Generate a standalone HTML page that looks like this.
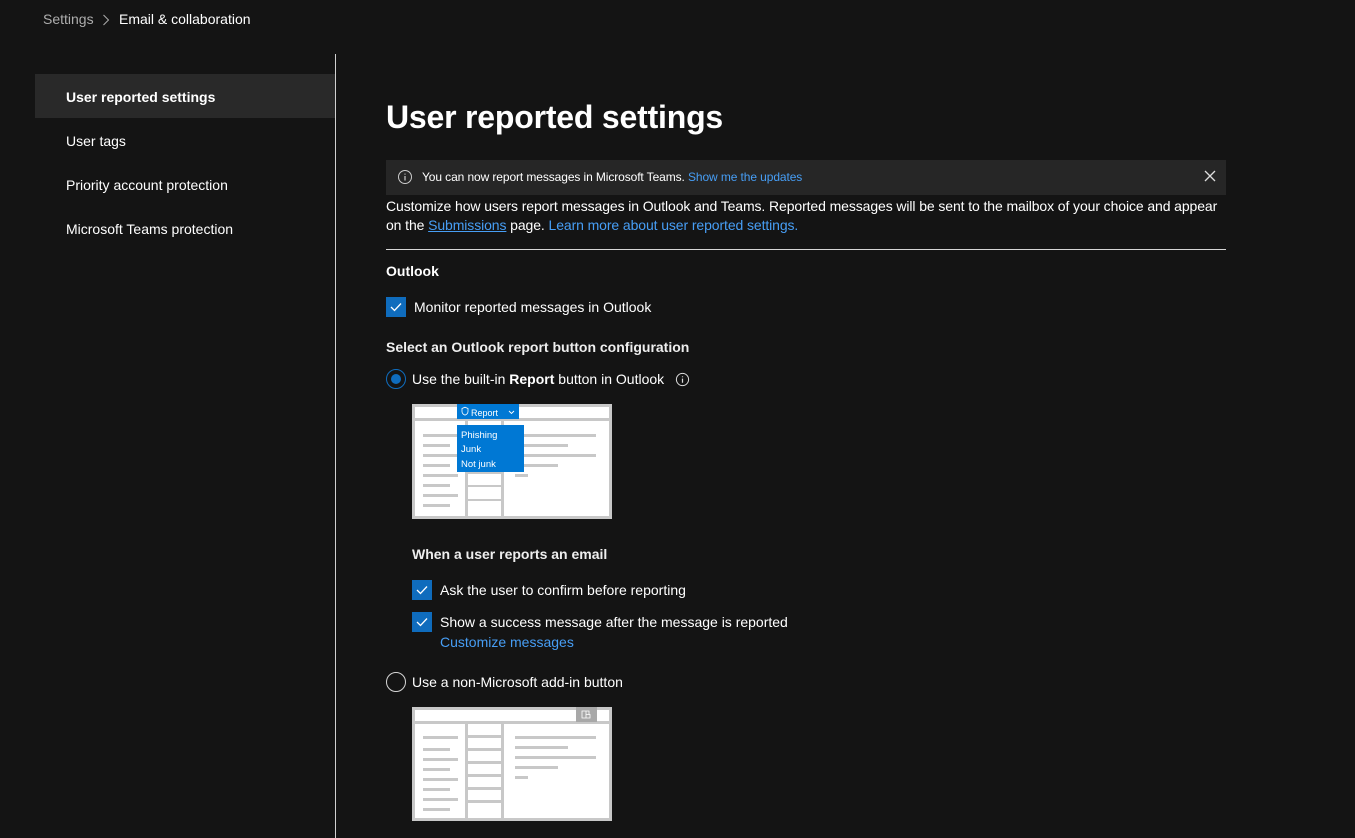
<!DOCTYPE html>
<html><head><meta charset="utf-8"><style>
*{margin:0;padding:0;box-sizing:border-box}
body{width:1355px;height:838px;background:#141414;color:#fff;font-family:"Liberation Sans",sans-serif;position:relative;overflow:hidden;font-size:14px}
.a{position:absolute;white-space:nowrap}
.link{color:#479ef5}
.cb{position:absolute;width:20px;height:20px;background:#0f6cbd;}
.cb svg{position:absolute;left:4px;top:5px}
.rad{position:absolute;width:20px;height:20px;border:1.5px solid #d6d6d6;border-radius:50%}
.nav{position:absolute;left:66px;font-size:14px;color:#fff}
</style></head><body>
<div class="a" style="left:43px;top:11px;color:#adadad;font-size:14px">Settings</div>
<svg class="a" style="left:102px;top:14px" width="8" height="12" viewBox="0 0 8 12"><path d="M1.5 1l5 5-5 5" fill="none" stroke="#adadad" stroke-width="1"/></svg>
<div class="a" style="left:119px;top:11px;color:#fff;font-size:14px">Email &amp; collaboration</div>

<div style="position:absolute;left:35px;top:74px;width:300px;height:44px;background:#292929"></div>
<div style="position:absolute;left:335px;top:54px;width:1px;height:784px;background:#d0d0d0"></div>
<div class="nav" style="top:89px;font-weight:bold">User reported settings</div>
<div class="nav" style="top:133px">User tags</div>
<div class="nav" style="top:177px">Priority account protection</div>
<div class="nav" style="top:221px">Microsoft Teams protection</div>

<div class="a" style="left:386px;top:99px;font-size:32px;font-weight:bold;letter-spacing:-0.2px">User reported settings</div>

<div style="position:absolute;left:386px;top:160px;width:840px;height:35px;background:#262626"></div>
<svg class="a" style="left:397px;top:169px" width="16" height="16" viewBox="0 0 16 16"><circle cx="8" cy="8" r="6.5" fill="none" stroke="#ccc" stroke-width="1"/><path d="M8 7v4.5M8 4.6v1" stroke="#ccc" stroke-width="1.2"/></svg>
<div class="a" style="left:422px;top:170px;font-size:12px;color:#fff;letter-spacing:-0.1px">You can now report messages in Microsoft Teams. <span class="link" style="margin-left:0px">Show me the updates</span></div>
<svg class="a" style="left:1204px;top:170px" width="12" height="12" viewBox="0 0 12 12"><path d="M1 1L11 11M11 1L1 11" stroke="#ddd" stroke-width="1.3"/></svg>

<div class="a" style="left:386px;top:197px;font-size:14px;line-height:19px;color:#fff;letter-spacing:-0.1px">Customize how users report messages in Outlook and Teams. Reported messages will be sent to the mailbox of your choice and appear<br>on the <span class="link" style="text-decoration:underline">Submissions</span> page. <span class="link">Learn more about user reported settings.</span></div>
<div style="position:absolute;left:386px;top:249px;width:840px;height:1px;background:#d6d6d6"></div>

<div class="a" style="left:386px;top:263px;font-weight:bold;font-size:14px">Outlook</div>
<div class="cb" style="left:386px;top:297px"><svg width="12" height="10" viewBox="0 0 12 10"><path d="M1 5l3.5 3.5L11 1.5" fill="none" stroke="#fff" stroke-width="1.3"/></svg></div>
<div class="a" style="left:414px;top:299px">Monitor reported messages in Outlook</div>

<div class="a" style="left:386px;top:339px;font-weight:bold;color:#eee">Select an Outlook report button configuration</div>
<div class="rad" style="left:386px;top:369px;border-color:#0f6cbd"><div style="position:absolute;left:3.5px;top:3.5px;width:10px;height:10px;border-radius:50%;background:#0f6cbd"></div></div>
<div class="a" style="left:412px;top:371px">Use the built-in <b>Report</b> button in Outlook</div>
<svg class="a" style="left:675px;top:372px" width="15" height="15" viewBox="0 0 16 16"><circle cx="8" cy="8" r="6.5" fill="none" stroke="#ddd" stroke-width="1.1"/><path d="M8 7v4.5M8 4.6v1" stroke="#ddd" stroke-width="1.3"/></svg>

<svg class="a" style="left:412px;top:404px" width="200" height="115" viewBox="0 0 200 115">
<rect x="1.5" y="1.5" width="197" height="112" fill="#fff" stroke="#c8c8c8" stroke-width="3"/>
<rect x="3" y="14" width="194" height="3" fill="#c8c8c8"/>
<rect x="53" y="17" width="3" height="96" fill="#c8c8c8"/>
<rect x="89" y="17" width="3" height="96" fill="#c8c8c8"/>
<g fill="#c8c8c8"><rect x="11" y="30" width="35" height="3"/><rect x="11" y="40" width="27" height="3"/><rect x="11" y="50" width="35" height="3"/><rect x="11" y="60" width="27" height="3"/><rect x="11" y="70" width="35" height="3"/><rect x="11" y="80" width="27" height="3"/><rect x="11" y="90" width="35" height="3"/><rect x="11" y="100" width="27" height="3"/>
<rect x="56" y="68" width="33" height="2"/><rect x="56" y="81" width="33" height="2"/><rect x="56" y="95" width="33" height="2"/>
<rect x="103" y="30" width="81" height="3"/><rect x="103" y="40" width="53" height="3"/><rect x="103" y="50" width="81" height="3"/><rect x="103" y="60" width="43" height="3"/><rect x="103" y="70" width="13" height="3"/></g>
<rect x="45" y="0" width="62" height="15" fill="#0078d4"/>
<rect x="45" y="21" width="67" height="47" fill="#0078d4"/>
<text x="59" y="12" font-size="9" fill="#fff" font-family="Liberation Sans">Report</text>
<path d="M50 4.5l3-1.3 3 1.3v3c0 2-1.5 3-3 3.6-1.5-.6-3-1.6-3-3.6z" fill="none" stroke="#fff" stroke-width=".8"/>
<path d="M97 7l2.5 2.5L102 7" fill="none" stroke="#fff" stroke-width=".9"/>
<text x="49" y="34" font-size="9.5" fill="#fff" font-family="Liberation Sans">Phishing</text>
<text x="49" y="48" font-size="9.5" fill="#fff" font-family="Liberation Sans">Junk</text>
<text x="49" y="63" font-size="9.5" fill="#fff" font-family="Liberation Sans">Not junk</text>
</svg>

<div class="a" style="left:412px;top:546px;font-weight:bold;color:#eee">When a user reports an email</div>
<div class="cb" style="left:412px;top:580px"><svg width="12" height="10" viewBox="0 0 12 10"><path d="M1 5l3.5 3.5L11 1.5" fill="none" stroke="#fff" stroke-width="1.3"/></svg></div>
<div class="a" style="left:440px;top:582px">Ask the user to confirm before reporting</div>
<div class="cb" style="left:412px;top:612px"><svg width="12" height="10" viewBox="0 0 12 10"><path d="M1 5l3.5 3.5L11 1.5" fill="none" stroke="#fff" stroke-width="1.3"/></svg></div>
<div class="a" style="left:440px;top:614px">Show a success message after the message is reported</div>
<div class="a link" style="left:440px;top:634px">Customize messages</div>

<div class="rad" style="left:386px;top:672px"></div>
<div class="a" style="left:412px;top:674px">Use a non-Microsoft add-in button</div>

<svg class="a" style="left:412px;top:707px" width="200" height="114" viewBox="0 0 200 114">
<rect x="1.5" y="1.5" width="197" height="111" fill="#fff" stroke="#c8c8c8" stroke-width="3"/>
<rect x="3" y="14" width="194" height="3" fill="#c8c8c8"/>
<rect x="164" y="0" width="21" height="15" fill="#a8a8a8"/>
<path d="M170 4h4v7h-4zM174 4h3v3.5h-3M174 7.5h4v3.5h-4" fill="none" stroke="#fff" stroke-width=".8"/>
<rect x="53" y="17" width="3" height="95" fill="#c8c8c8"/>
<rect x="89" y="17" width="3" height="95" fill="#c8c8c8"/>
<g fill="#c8c8c8"><rect x="11" y="29" width="35" height="3"/><rect x="11" y="41" width="27" height="3"/><rect x="11" y="51" width="35" height="3"/><rect x="11" y="61" width="27" height="3"/><rect x="11" y="71" width="35" height="3"/><rect x="11" y="81" width="27" height="3"/><rect x="11" y="91" width="35" height="3"/><rect x="11" y="101" width="27" height="3"/>
<rect x="56" y="28" width="33" height="3"/><rect x="56" y="41" width="33" height="3"/><rect x="56" y="54" width="33" height="3"/><rect x="56" y="67" width="33" height="3"/><rect x="56" y="80" width="33" height="3"/><rect x="56" y="93" width="33" height="3"/>
<rect x="103" y="29" width="81" height="3"/><rect x="103" y="39" width="53" height="3"/><rect x="103" y="49" width="81" height="3"/><rect x="103" y="59" width="43" height="3"/><rect x="103" y="69" width="13" height="3"/></g>
</svg>
</body></html>
